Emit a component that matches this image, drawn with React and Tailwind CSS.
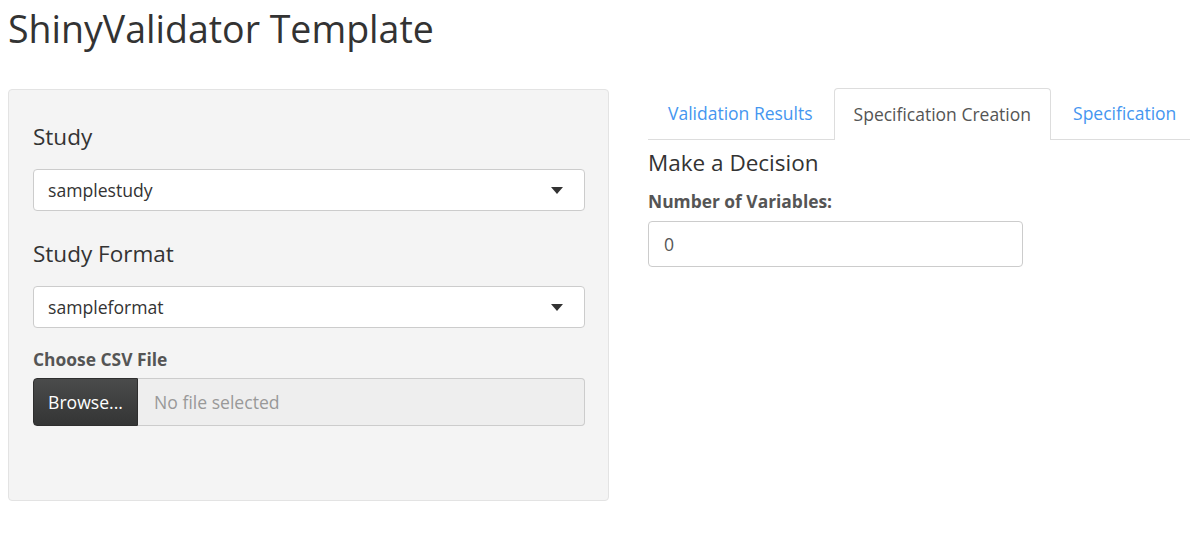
import React from "react";

function Caret() {
  return (
    <svg width="12" height="7" viewBox="0 0 12 7" className="shrink-0">
      <path d="M0 0 L12 0 L6 7 Z" fill="#333" />
    </svg>
  );
}

function SelectBox({ value }) {
  return (
    <div className="flex h-[42px] items-center justify-between rounded-[4px] border border-[#ccc] bg-white pl-[14px] pr-[21px] text-[17.6px] text-[#333]">
      <span>{value}</span>
      <Caret />
    </div>
  );
}

export default function App() {
  return (
    <div
      className="min-h-[548px] overflow-hidden bg-white px-[8px] text-[#333]"
      style={{ fontFamily: '"Open Sans", "Liberation Sans", sans-serif' }}
    >
      <h1 className="pt-[9px] text-[37.5px] font-normal leading-[40px] text-[#333]">
        ShinyValidator Template
      </h1>
      <div className="mt-[39px] flex items-start">
        {/* Sidebar */}
        <div className="mt-[1px] w-[601px] shrink-0 rounded-[4px] border border-[#e3e3e3] bg-[#f4f4f4] pl-[24px] pr-[23px] pt-[32px] pb-[74px]">
          <div className="mb-[17px] text-[22.5px] leading-[30px]">Study</div>
          <SelectBox value="samplestudy" />
          <div className="mt-[28px] mb-[17px] text-[22.5px] leading-[30px]">Study Format</div>
          <SelectBox value="sampleformat" />
          <div className="mt-[20px] mb-[8px] text-[17.4px] font-bold leading-[22px] text-[#555]">
            Choose CSV File
          </div>
          <div className="flex h-[48px]">
            <div className="flex w-[105px] items-center justify-center rounded-l-[4px] border border-[#2e2e2e] bg-gradient-to-b from-[#4a4b4b] to-[#343535] text-[17.6px] text-white">
              Browse...
            </div>
            <div className="flex flex-1 items-center rounded-r-[4px] border border-l-0 border-[#ccc] bg-[#eee] pl-[16px] text-[17.6px] text-[#999]">
              No file selected
            </div>
          </div>
        </div>

        {/* Main */}
        <div className="ml-[39px] min-w-0 flex-1">
          <div className="flex h-[52px] w-[calc(100%+8px)] border-b border-[#ddd]">
            <div className="mr-[2px] flex h-[51px] shrink-0 items-center whitespace-nowrap pl-[20px] pr-[19px] text-[17.5px] text-[#4596f0]">
              Validation Results
            </div>
            <div className="-mb-px mr-[2px] flex h-[52px] shrink-0 items-center whitespace-nowrap rounded-t-[4px] border border-b-0 border-[#ddd] bg-white px-[19px] pb-[1px] text-[17.5px] text-[#555]">
              Specification Creation
            </div>
            <div className="flex h-[51px] shrink-0 items-center whitespace-nowrap px-[20px] text-[17.5px] text-[#4596f0]">
              Specification
            </div>
          </div>
          <div className="mt-[8px] text-[22.5px] leading-[30px] text-[#333]">Make a Decision</div>
          <div className="mt-[12px] text-[17.4px] font-bold leading-[22px] text-[#555]">
            Number of Variables:
          </div>
          <div className="mt-[9px] flex h-[46px] w-[375px] items-center rounded-[4px] border border-[#ccc] bg-white px-[15px] text-[17.6px] text-[#555]">
            0
          </div>
        </div>
      </div>
    </div>
  );
}
